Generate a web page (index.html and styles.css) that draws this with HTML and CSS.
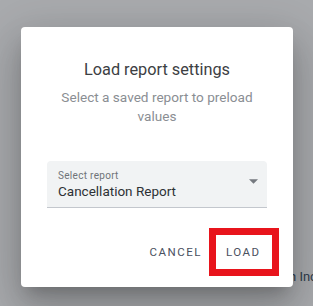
FILE: index.html
```html
<!DOCTYPE html>
<html lang="en">

<head>
    <meta charset="UTF-8">
    <title>Load report settings</title>
    <link rel="stylesheet" href="styles.css">
</head>

<body>
    <span class="backdropText">h Inc</span>
    <div class="dialog" role="dialog">
        <h2 class="dialog-title">Load report settings</h2>
        <p class="dialog-subtitle">Select a saved report to preload values</p>
        <div class="select">
            <div class="select-text">
                <span class="select-label">Select report</span>
                <span class="select-value">Cancellation Report</span>
            </div>
            <svg class="select-arrow" width="9" height="5" viewBox="0 0 10 5">
                <path d="M0 0 L10 0 L5 5 Z" fill="#75797f" />
            </svg>
        </div>
        <div class="dialog-actions">
            <button class="dialogButton">Cancel</button>
            <button class="dialogButton dialogButton-marked">Load</button>
        </div>
    </div>
</body>

</html>
```
FILE: styles.css
```css
html,
button {
    font-family: Roboto, 'Liberation Sans', sans-serif;
}

body {
    margin: 0;
    width: 313px;
    height: 306px;
    background: #a9abae;
    padding: 27px 0 0 21px;
    box-sizing: border-box;
    overflow: hidden;
    position: relative;
}

.backdropText {
    position: absolute;
    left: 289px;
    top: 269px;
    font-size: 13px;
    white-space: nowrap;
    color: #2f3d4c;
}

.dialog {
    position: relative;
    width: 272px;
    height: 260px;
    box-sizing: border-box;
    background: white;
    border-radius: 4px;
    padding: 31px 26px 0 26px;
    display: flex;
    flex-direction: column;
    box-shadow: 0 11px 15px -7px rgba(0, 0, 0, .2),
        0 24px 38px 3px rgba(0, 0, 0, .14),
        0 9px 46px 8px rgba(0, 0, 0, .12);
}

.dialog-title {
    margin: 0;
    font-size: 16.3px;
    font-weight: 400;
    line-height: 24px;
    text-align: center;
    color: #3c4043;
}

.dialog-subtitle {
    margin: 6px 0 0 0;
    font-size: 13.6px;
    line-height: 19px;
    text-align: center;
    color: #8a8e93;
}

.select {
    margin-top: 35px;
    height: 47px;
    box-sizing: border-box;
    background: #f1f3f4;
    border-radius: 4px 4px 0 0;
    border-bottom: 1px solid #c3c7cd;
    padding: 0 9px 0 11px;
    display: flex;
    align-items: center;
}

.select-text {
    flex: 1;
    display: flex;
    flex-direction: column;
    padding-top: 2px;
}

.select-label {
    font-size: 10px;
    line-height: 12px;
    color: #6f7378;
    letter-spacing: .3px;
}

.select-value {
    font-size: 13.5px;
    line-height: 18px;
    color: #2d3135;
}

.select-arrow {
    margin-top: -5px;
}

.dialog-actions {
    margin-top: 27px;
    margin-right: -5px;
    display: flex;
    justify-content: flex-end;
    gap: 6px;
}

.dialogButton {
    height: 34px;
    padding: 0 8px;
    border: 0;
    background: transparent;
    font-size: 11.5px;
    font-weight: 400;
    letter-spacing: 1.5px;
    text-transform: uppercase;
    color: #4a5060;
}

.dialogButton-marked {
    min-width: 56px;
    padding: 0 10px;
    text-align: left;
    outline: 7px solid #e8141c;
}
```
